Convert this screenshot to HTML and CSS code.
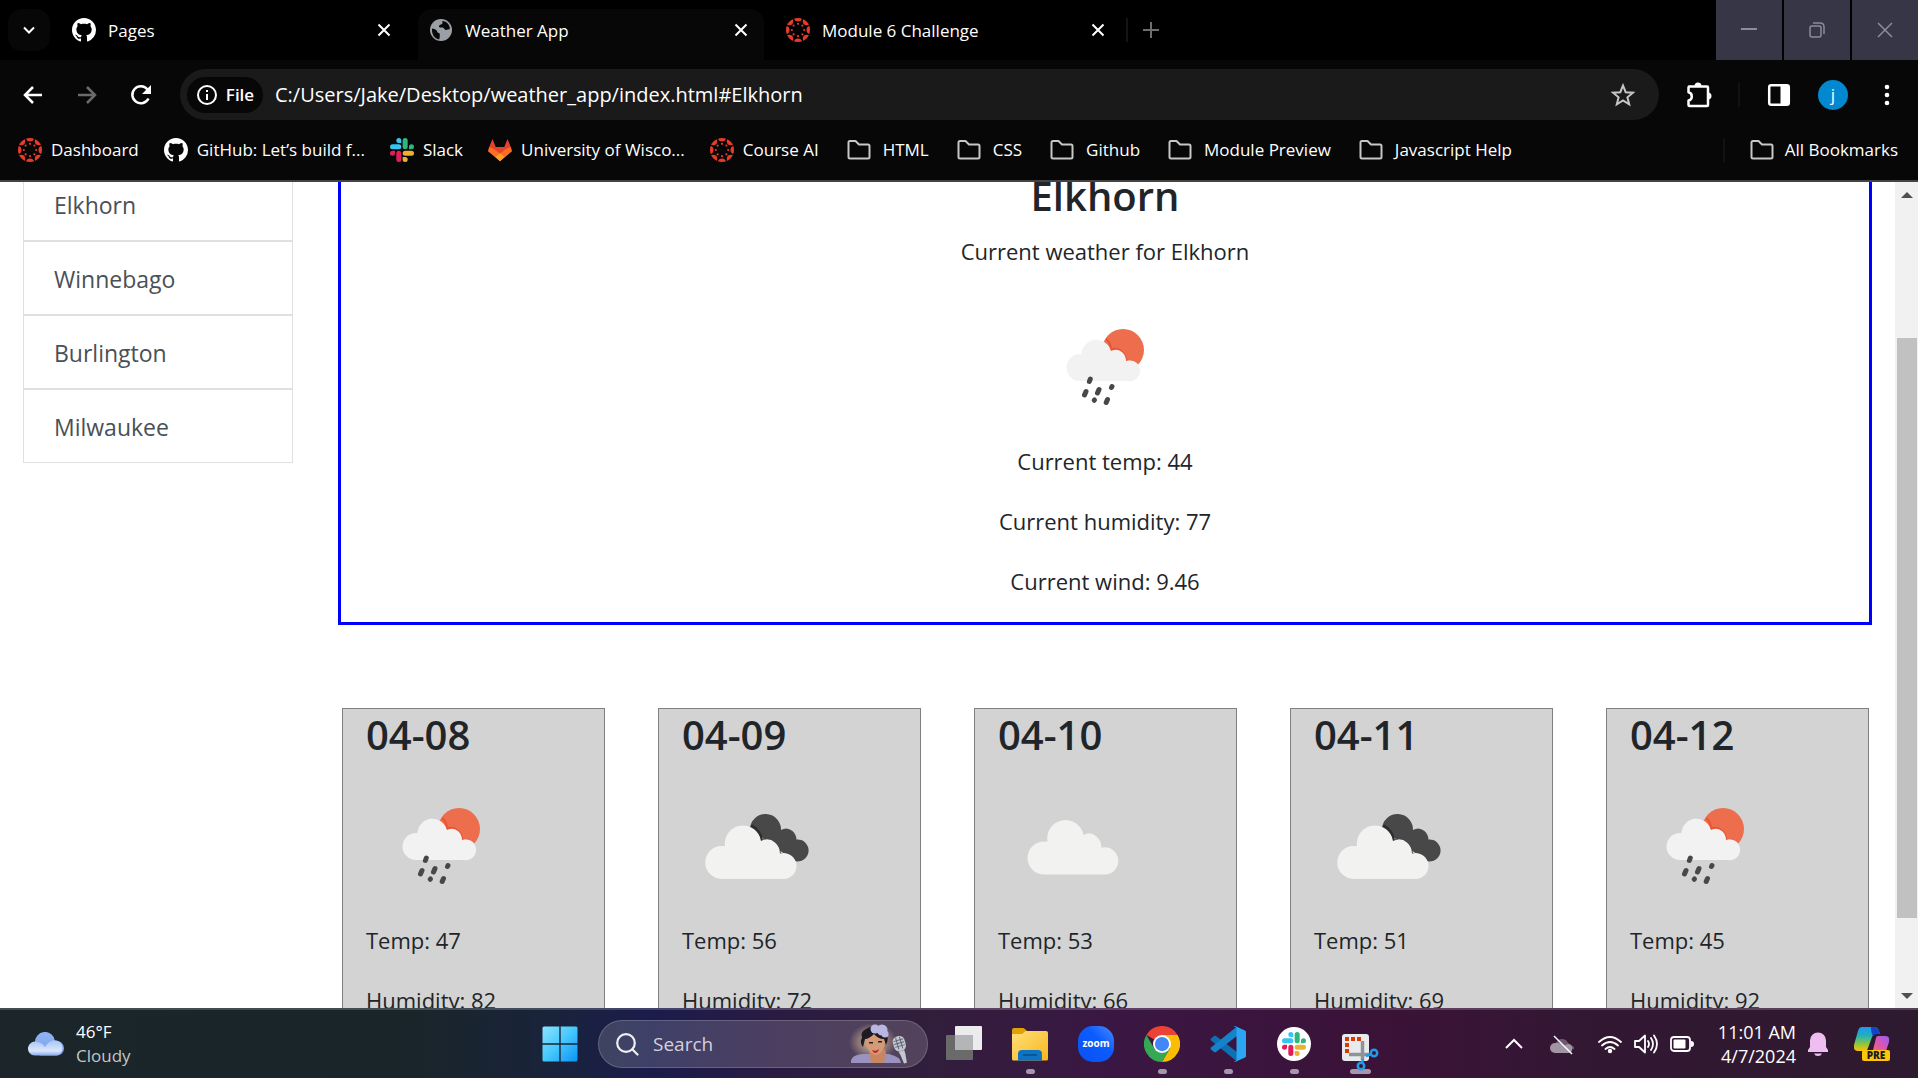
FILE: index.html
```html
<!DOCTYPE html>
<html lang="en">
<head>
<meta charset="utf-8">
<title>Weather App</title>
<link rel="stylesheet" href="styles.css">
</head>
<body>
<svg class="sprite" aria-hidden="true">
  <defs>
    <linearGradient id="g-win" x1="0" y1="0" x2="1" y2="1"><stop offset="0" stop-color="#8be3ff"/><stop offset=".5" stop-color="#45c8fb"/><stop offset="1" stop-color="#0a93f8"/></linearGradient>
    <linearGradient id="g-cloud" x1="0" y1="0" x2="0" y2="1"><stop offset="0" stop-color="#8fb2f4"/><stop offset="1" stop-color="#7fa4ea"/></linearGradient>
    <linearGradient id="g-cloud2" x1="0" y1="0" x2="0" y2="1"><stop offset="0" stop-color="#a9c4f6"/><stop offset=".7" stop-color="#dbe6fb"/><stop offset="1" stop-color="#88aaf0"/></linearGradient>
    <linearGradient id="g-folder" x1="0" y1="0" x2="1" y2="1"><stop offset="0" stop-color="#ffdf7c"/><stop offset="1" stop-color="#f8b71c"/></linearGradient>
    <linearGradient id="g-zoom" x1="1" y1="0" x2="0" y2="1"><stop offset="0" stop-color="#4c8bff"/><stop offset=".4" stop-color="#0b5cff"/><stop offset="1" stop-color="#0b50f0"/></linearGradient>
    <linearGradient id="g-cop1" x1="0" y1="0" x2="0" y2="1"><stop offset="0" stop-color="#2196f3"/><stop offset=".35" stop-color="#1cb0c0"/><stop offset=".7" stop-color="#8cc63f"/><stop offset="1" stop-color="#ffc107"/></linearGradient>
    <linearGradient id="g-cop2" x1="1" y1="0" x2="0" y2="1"><stop offset="0" stop-color="#9a5cf5"/><stop offset=".5" stop-color="#e356a8"/><stop offset="1" stop-color="#ff7a50"/></linearGradient>
    <radialGradient id="g-glow"><stop offset="0" stop-color="#f5dca8" stop-opacity=".9"/><stop offset=".5" stop-color="#e8c89a" stop-opacity=".5"/><stop offset="1" stop-color="#e8c89a" stop-opacity="0"/></radialGradient>
    <clipPath id="c-disc"><circle cx="12" cy="12" r="12"/></clipPath>

    <symbol id="github" viewBox="0 0 16 16"><path fill="#fff" d="M8 0C3.58 0 0 3.58 0 8c0 3.54 2.29 6.53 5.47 7.59.4.07.55-.17.55-.38 0-.19-.01-.82-.01-1.49-2.01.37-2.53-.49-2.69-.94-.09-.23-.48-.94-.82-1.13-.28-.15-.68-.52-.01-.53.63-.01 1.08.58 1.23.82.72 1.21 1.87.87 2.33.66.07-.52.28-.87.51-1.07-1.78-.2-3.64-.89-3.64-3.95 0-.87.31-1.59.82-2.15-.08-.2-.36-1.02.08-2.12 0 0 .67-.21 2.2.82.64-.18 1.32-.27 2-.27.68 0 1.36.09 2 .27 1.53-1.04 2.2-.82 2.2-.82.44 1.1.16 1.92.08 2.12.51.56.82 1.27.82 2.15 0 3.07-1.87 3.75-3.65 3.95.29.25.54.73.54 1.48 0 1.07-.01 1.93-.01 2.2 0 .21.15.46.55.38A8.013 8.013 0 0016 8c0-4.42-3.58-8-8-8z"/></symbol>
    <symbol id="canvas" viewBox="0 0 24 24"><g fill="#e43b2c"><g clip-path="url(#c-disc)"><circle cx="12" cy="-.5" r="4"/><circle cx="12" cy="24.500" r="4"/><circle cx="-.5" cy="12" r="4"/><circle cx="24.500" cy="12" r="4"/><circle cx="3.200" cy="3.200" r="4"/><circle cx="20.800" cy="3.200" r="4"/><circle cx="3.200" cy="20.800" r="4"/><circle cx="20.800" cy="20.800" r="4"/></g><circle cx="12" cy="5.800" r="1.100"/><circle cx="12" cy="18.200" r="1.100"/><circle cx="5.800" cy="12" r="1.100"/><circle cx="18.200" cy="12" r="1.100"/><circle cx="7.600" cy="7.600" r="1.100"/><circle cx="16.400" cy="7.600" r="1.100"/><circle cx="7.600" cy="16.400" r="1.100"/><circle cx="16.400" cy="16.400" r="1.100"/></g></symbol>
    <symbol id="globe" viewBox="0 0 24 24"><circle cx="12" cy="12" r="11" fill="#9aa0a6"/><path fill="#080808" d="M3 10.500c3.500.2 5 1.800 5.200 3.300.2 1.200 1.600 1 2.300 1.800.6.8.2 2 .2 3.400 0 1.200-.4 2-.5 2.500C5.500 20.500 2.500 16.500 3 10.500zM13 3c1.200 1.800.4 3-.8 3.500-1.500.6-2.200.6-2.200 2 0 1.200 1.500 1 3.500 1 1.500 0 1.500 2 3 2.400 1.300.3 2.600-.6 4.400-.6.3-5-4-8.300-7.900-8.300z"/></symbol>
    <symbol id="slack" viewBox="0 0 24 24"><path fill="#e01e5a" d="M5.042 15.165a2.528 2.528 0 0 1-2.520 2.523A2.528 2.528 0 0 1 0 15.165a2.527 2.527 0 0 1 2.522-2.520h2.520v2.520zM6.313 15.165a2.527 2.527 0 0 1 2.521-2.520 2.527 2.527 0 0 1 2.521 2.520v6.313A2.528 2.528 0 0 1 8.834 24a2.528 2.528 0 0 1-2.521-2.522v-6.313z"/><path fill="#36c5f0" d="M8.834 5.042a2.528 2.528 0 0 1-2.521-2.520A2.528 2.528 0 0 1 8.834 0a2.528 2.528 0 0 1 2.521 2.522v2.520H8.834zM8.834 6.313a2.528 2.528 0 0 1 2.521 2.521 2.528 2.528 0 0 1-2.521 2.521H2.522A2.528 2.528 0 0 1 0 8.834a2.528 2.528 0 0 1 2.522-2.521h6.312z"/><path fill="#2eb67d" d="M18.956 8.834a2.528 2.528 0 0 1 2.522-2.521A2.528 2.528 0 0 1 24 8.834a2.528 2.528 0 0 1-2.522 2.521h-2.522V8.834zM17.688 8.834a2.528 2.528 0 0 1-2.523 2.521 2.527 2.527 0 0 1-2.520-2.521V2.522A2.527 2.527 0 0 1 15.165 0a2.528 2.528 0 0 1 2.523 2.522v6.312z"/><path fill="#ecb22e" d="M15.165 18.956a2.528 2.528 0 0 1 2.523 2.522A2.528 2.528 0 0 1 15.165 24a2.527 2.527 0 0 1-2.520-2.522v-2.522h2.520zM15.165 17.688a2.527 2.527 0 0 1-2.520-2.523 2.526 2.526 0 0 1 2.520-2.520h6.313A2.527 2.527 0 0 1 24 15.165a2.528 2.528 0 0 1-2.522 2.523h-6.313z"/></symbol>
    <symbol id="gitlab" viewBox="0 0 24 24"><path fill="#e24329" d="M4.500 1 1 9.500 12 23 23 9.500 19.500 1l-3.200 8H7.700z"/><path fill="#fc6d26" d="M1 9.300 0 13.300 12 23.200l12-9.900-1-4c-3 .5-5 1.700-7 3.200L12 15.500 8 12.500C6 11 4 9.800 1 9.300z"/><path fill="#fca326" d="m12 15.300-4.500 3.800L12 23.200l4.500-4.100z"/></symbol>
    <symbol id="folder" viewBox="0 0 24 24"><path fill="none" stroke="#c7c7c7" stroke-width="2" stroke-linejoin="round" d="M1.500 4.500q0-1.500 1.500-1.500h5.500l3.500 3.500h9q1.500 0 1.500 1.500v11q0 1.500-1.500 1.500H3q-1.500 0-1.500-1.500z"/></symbol>
    <symbol id="close" viewBox="0 0 24 24"><path stroke="#fff" stroke-width="2" d="m6.500 6.500 11 11m0-11-11 11"/></symbol>

    <symbol id="rain" viewBox="0 0 150 150"><circle cx="93" cy="58" r="21" fill="#ec6e4c"/><path fill="none" stroke="#ea5233" stroke-width="2" d="M76 47q5 4 5 11 5-3 10 1 5 4 5 10 7-1 11 5"/><path fill="#f2f2f2" d="M50 89a13.500 13.500 0 0 1 0-27q1 0 1.500.1A15 15 0 0 1 81 59q7-3 11.500 1.500 3.500 3.500 3.500 8.500A10.500 10.500 0 1 1 97 89z"/><g stroke="#48484a" stroke-width="5" stroke-linecap="round"><path d="m60.300 87-.9 2.500M56 99.500l-1.500 3.500M69 97.500l-1.500 3.500M82 94.500l-.5 1M64.500 108l-.3.300M77.500 107.500l-1.300 3"/></g></symbol>
    <symbol id="cloud" viewBox="0 0 150 150"><path fill="#f2f2f0" d="M46 103.500a16.500 16.500 0 0 1 0-33q1.500 0 3.500.3A18.300 18.300 0 0 1 85.500 64q7-4 13 1.500 5 4.500 5 11.200A13.600 13.600 0 1 1 106.500 103.500z"/></symbol>
    <symbol id="clouds" viewBox="0 0 150 150"><path fill="#484849" d="M68 58a15.500 15.500 0 1 1 31 1q6-3.500 11.500 1 4 4 4 8.500a11 11 0 1 1-2 21.500Z"/><path fill="none" stroke="#2d2d30" stroke-width="4" d="M69 55q10 5 10 16 9-3 14 3 4 5 4 10 9 0 14 7"/><g transform="translate(-6 4)"><path fill="#f2f2f0" d="M46 104a16.500 16.500 0 0 1-.5-33q1.500 0 3.500.3A18 18 0 0 1 85 66q8-4 14 1.500 5 4.500 5 11A13 13 0 1 1 107 104z"/></g></symbol>
  </defs>
</svg>

<header class="browser">
  <div class="tabstrip">
    <button class="tab-search" aria-label="Search tabs"><svg width="24" height="24" viewBox="0 0 24 24"><path fill="none" stroke="#fff" stroke-width="2" d="m7 9.500 5 5 5-5"/></svg></button>
    <div class="tab"><svg class="ico"><use href="#github"/></svg><span>Pages</span><button aria-label="Close Pages"><svg class="ico"><use href="#close"/></svg></button></div>
    <div class="tab active"><svg class="ico"><use href="#globe"/></svg><span>Weather App</span><button aria-label="Close Weather App"><svg class="ico"><use href="#close"/></svg></button></div>
    <div class="tab"><svg class="ico"><use href="#canvas"/></svg><span>Module 6 Challenge</span><button aria-label="Close Module 6 Challenge"><svg class="ico"><use href="#close"/></svg></button></div>
    <button class="new-tab" aria-label="New tab"><svg class="ico" viewBox="0 0 24 24"><path stroke="#6e6e6e" stroke-width="2" d="M12 4v16M4 12h16"/></svg></button>
    <div class="window-controls">
      <button aria-label="Minimize"><svg class="ico" viewBox="0 0 24 24"><path stroke="#8d8d99" stroke-width="2" d="M4 11h16"/></svg></button>
      <button aria-label="Restore"><svg class="ico" viewBox="0 0 24 24"><g fill="none" stroke="#8d8d99" stroke-width="1.500"><rect x="5" y="8" width="11" height="11" rx="2"/><path d="M8 5h7q4 0 4 4v7"/></g></svg></button>
      <button aria-label="Close"><svg class="ico" viewBox="0 0 24 24"><path stroke="#8d8d99" stroke-width="1.500" d="m5 5 14 14M19 5 5 19"/></svg></button>
    </div>
  </div>

  <div class="toolbar">
    <div class="nav-buttons">
      <button aria-label="Back"><svg class="ico" viewBox="0 0 24 24"><path fill="none" stroke="#fff" stroke-width="2.500" d="M21 12H4m8-8-8 8 8 8"/></svg></button>
      <button aria-label="Forward"><svg class="ico" viewBox="0 0 24 24"><path fill="none" stroke="#6b6b6b" stroke-width="2.500" d="M3 12h17m-8-8 8 8-8 8"/></svg></button>
      <button aria-label="Reload"><svg class="ico" viewBox="0 0 24 24"><path fill="none" stroke="#fff" stroke-width="2.500" d="M19.500 15.500A8.500 8.500 0 1 1 18.500 6.500L20 8.500"/><path fill="#fff" d="M22 2v9h-9z"/></svg></button>
    </div>
    <div class="omnibox">
      <button class="chip"><svg width="22" height="22" viewBox="0 0 22 22"><circle cx="11" cy="11" r="9" fill="none" stroke="#fff" stroke-width="2"/><path stroke="#fff" stroke-width="2" d="M11 6v2m0 2v6"/></svg>File</button>
      <input type="text" aria-label="Address" value="C:/Users/Jake/Desktop/weather_app/index.html#Elkhorn">
      <button aria-label="Bookmark this page"><svg class="ico" viewBox="0 0 24 24"><path fill="none" stroke="#c7c7c7" stroke-width="2" d="m12 2.500 2.700 6.700 7.300.5-5.600 4.600 1.800 7L12 17.500l-6.200 3.800 1.800-7L2 9.700l7.300-.5z"/></svg></button>
    </div>
    <div class="actions">
      <button aria-label="Extensions"><svg width="26" height="26" viewBox="0 0 26 26"><path fill="none" stroke="#fff" stroke-width="2.500" stroke-linejoin="round" d="M3 4.500h18q1 0 1 1V23q0 1-1 1H3.500q-1 0-1-1v-4.500a4.200 4.200 0 0 0 0-8.200V5.500q0-1 1-1z"/><path fill="#fff" d="M8.500 4a3.500 3.500 0 0 1 7 0zM22 10.500a3.500 3.500 0 0 1 0 7z"/></svg></button>
      <span class="divider"></span>
      <button aria-label="Side panel"><svg class="ico" viewBox="0 0 24 24"><rect x="2.200" y="2.200" width="19.600" height="19.600" rx="2" fill="none" stroke="#fff" stroke-width="2.500"/><path fill="#fff" d="M13.500 2H22v20h-8.500z"/></svg></button>
      <button class="avatar" aria-label="Profile">j</button>
      <button aria-label="Menu"><svg class="ico" viewBox="0 0 24 24"><g fill="#fff"><circle cx="12" cy="4" r="2.300"/><circle cx="12" cy="12" r="2.300"/><circle cx="12" cy="20" r="2.300"/></g></svg></button>
    </div>
  </div>

  <nav class="bookmarks">
    <a href="#"><svg class="ico"><use href="#canvas"/></svg>Dashboard</a>
    <a href="#"><svg class="ico"><use href="#github"/></svg>GitHub: Let’s build f...</a>
    <a href="#"><svg class="ico"><use href="#slack"/></svg>Slack</a>
    <a href="#"><svg class="ico"><use href="#gitlab"/></svg>University of Wisco...</a>
    <a href="#"><svg class="ico"><use href="#canvas"/></svg>Course AI</a>
    <a class="dir" href="#"><svg class="ico"><use href="#folder"/></svg>HTML</a>
    <a class="dir" href="#"><svg class="ico"><use href="#folder"/></svg>CSS</a>
    <a class="dir" href="#"><svg class="ico"><use href="#folder"/></svg>Github</a>
    <a class="dir" href="#"><svg class="ico"><use href="#folder"/></svg>Module Preview</a>
    <a class="dir" href="#"><svg class="ico"><use href="#folder"/></svg>Javascript Help</a>
    <span class="divider"></span>
    <a href="#"><svg class="ico"><use href="#folder"/></svg>All Bookmarks</a>
  </nav>
</header>

<div class="viewport">
  <div class="page">
    <nav class="cities">
      <a href="#Elkhorn">Elkhorn</a>
      <a href="#Winnebago">Winnebago</a>
      <a href="#Burlington">Burlington</a>
      <a href="#Milwaukee">Milwaukee</a>
    </nav>
    <main>
      <section class="current">
        <h1>Elkhorn</h1>
        <p>Current weather for Elkhorn</p>
        <svg class="weather"><use href="#rain"/></svg>
        <p>Current temp: 44</p>
        <p>Current humidity: 77</p>
        <p>Current wind: 9.46</p>
      </section>
      <section class="forecast">
        <article><h2>04-08</h2><svg class="weather"><use href="#rain"/></svg><p>Temp: 47</p><p>Humidity: 82</p></article>
        <article><h2>04-09</h2><svg class="weather"><use href="#clouds"/></svg><p>Temp: 56</p><p>Humidity: 72</p></article>
        <article><h2>04-10</h2><svg class="weather"><use href="#cloud"/></svg><p>Temp: 53</p><p>Humidity: 66</p></article>
        <article><h2>04-11</h2><svg class="weather"><use href="#clouds"/></svg><p>Temp: 51</p><p>Humidity: 69</p></article>
        <article><h2>04-12</h2><svg class="weather"><use href="#rain"/></svg><p>Temp: 45</p><p>Humidity: 92</p></article>
      </section>
    </main>
  </div>
  <div class="scrollbar">
    <svg width="12" height="6" viewBox="0 0 12 6"><path fill="#505050" d="M6 0l6 6H0z"/></svg>
    <div class="track"><div class="thumb"></div></div>
    <svg width="12" height="6" viewBox="0 0 12 6"><path fill="#505050" d="M0 0h12L6 6z"/></svg>
  </div>
</div>

<footer class="taskbar">
  <button class="widget">
    <svg width="36" height="24" viewBox="0 0 36 24"><path fill="url(#g-cloud)" d="M7 11a10 10 0 0 1 20-2 7.500 7.500 0 0 1 9 7.500 7 7 0 0 1-7 7H12z"/><path fill="url(#g-cloud2)" d="M7 23.500a7 7 0 1 1 3-13.300q5 1 7 5 2-4.500 7-6.500a7.500 7.500 0 0 1 5 14.800z"/></svg>
    <span>46°F<small>Cloudy</small></span>
  </button>
  <div class="apps">
    <button aria-label="Start"><svg width="36" height="36" viewBox="0 0 36 36"><path fill="url(#g-win)" d="M2 .5h15.300v16.800H.5V2Q.5.500 2 .5zM18.700.5H34q1.500 0 1.500 1.500v15.300H18.700zM.5 18.700h16.800v16.800H2q-1.500 0-1.500-1.500zM18.700 18.700h16.800V34q0 1.500-1.500 1.500H18.700z"/></svg></button>
    <label class="search">
      <svg class="ico" viewBox="0 0 24 24"><g fill="none" stroke="#f0f0f4" stroke-width="2.200"><circle cx="11" cy="11" r="8.800"/><path stroke-linecap="round" d="m17.500 17.500 5 5"/></g></svg>
      <input type="search" placeholder="Search" aria-label="Search">
      <svg width="62" height="40" viewBox="0 0 62 40"><ellipse cx="24" cy="18" rx="24" ry="19" fill="url(#g-glow)"/><path fill="#9a93bf" d="M2 39q-1-8 12-9h26q12 3 12 9z"/><path fill="#c98663" d="M20 26h13l2 13H22z"/><path fill="#d49a76" d="M16 16q0-8 11-8 9 0 9 9 0 12-9 14-9-2-11-15z"/><path fill="#1f1a22" d="M14 23q-4-5-1-9-2-6 4-9 6-4 11-1l8 5q5 4 1 12l-2-6q-6 0-10-5-5 5-9 5z"/><g fill="#b9b6e4"><circle cx="26" cy="5" r="4.500"/><circle cx="33" cy="6" r="5.500"/><circle cx="36" cy="10" r="3.500"/></g><path fill="#c98663" d="M27 39q-1-7 5-10l4-5 1 6q0 6-5 9z"/><path fill="#c8202c" d="M23 26q4 2 7-1-1 4-4 4-2 0-3-3z"/><path fill="#22202a" d="M20 18h4v1.500h-4zM29 17h4v1.500h-4z"/><g transform="rotate(-16 51 22)"><rect x="45" y="12" width="12" height="15" rx="5" fill="#c3c7d0"/><path stroke="#5f6370" d="M46 16h10M46 19h10M46 22h10M49 13v12M53 13v12"/><path fill="#c3c7d0" d="M48 27h6v4l-1 9h-3l-1-9z"/></g></svg>
    </label>
    <button aria-label="Task view"><svg width="36" height="36" viewBox="0 0 36 36"><rect x="9" width="27" height="24" rx="1" fill="#ececee"/><rect y="9" width="27" height="25" rx="1" fill="#6a6a6a"/><path fill="#b5b5b8" d="M9 9h18v15H9z"/></svg></button>
    <button class="open" aria-label="File Explorer"><svg width="36" height="36" viewBox="0 0 36 36"><path fill="#e0a106" d="M0 4q0-2 2-2h9q1 0 3 2l2 2-3 4H0z"/><path fill="url(#g-folder)" d="M0 8h10l4-3h20q2 0 2 2v26q0 1.500-1.500 1.500h-33Q0 34.500 0 33z"/><path fill="#0f73c4" d="M6 34.500V28q0-4 4-4h16q4 0 4 4v6.500z"/><path stroke="#0b4c85" stroke-width="1.500" d="M11 29h14"/></svg></button>
    <button aria-label="Zoom"><svg width="36" height="36" viewBox="0 0 36 36"><rect width="36" height="36" rx="15" fill="url(#g-zoom)"/><text class="zoom-text" x="18" y="21" text-anchor="middle">zoom</text></svg></button>
    <button class="open" aria-label="Chrome"><svg width="36" height="36" viewBox="0 0 48 48"><path fill="#ea4335" d="M24 24 3.200 12A24 24 0 0 1 44.800 12z"/><path fill="#fbbc04" d="M24 12h20.800A24 24 0 0 1 24 48l10.400-18z"/><path fill="#34a853" d="M3.200 12 13.600 30 24 36l10.400-6L24 48A24 24 0 0 1 3.200 12z"/><circle cx="24" cy="24" r="12" fill="#fff"/><circle cx="24" cy="24" r="9.500" fill="#4285f4"/></svg></button>
    <button class="open" aria-label="Visual Studio Code"><svg width="36" height="36" viewBox="0 0 36 36"><path fill="#0f6fb3" d="M1 12.500 4 10q1-.7 2 0l21 16v9.500L1 14.500q-1-1 0-2z"/><path fill="#1583cc" d="M1 23.500 4 26q1 .7 2 0l21-16V.5L1 21.500q-1 1 0 2z"/><path fill="#2aa6f2" d="M25.500.3 35 4.500q1 .5 1 1.500v24q0 1-1 1.500l-9.500 4.200q-1.500.3-2-.7 3 1 3-2V3q0-3-3-2 .5-1 2-.7z"/></svg></button>
    <button class="open" aria-label="Slack"><svg width="36" height="36" viewBox="0 0 36 36"><circle cx="18" cy="18" r="17" fill="#fff"/><use href="#slack" x="6" y="6" width="24" height="24"/></svg></button>
    <button class="open focused" aria-label="Snipping Tool"><svg class="snip" width="36" height="36" viewBox="0 0 36 36"><rect y="8" width="27" height="27" rx="3" fill="#e9eaee"/><path fill="none" stroke="#d83b01" stroke-width="4" stroke-dasharray="4 2" d="M5 27V13h14"/><path fill="none" stroke="#8e9299" stroke-width="3.500" d="M20.500 15v19M7 28.500h20"/><g fill="none" stroke="#1e9de8" stroke-width="2.500"><circle cx="32" cy="27" r="3.200"/><circle cx="19" cy="40" r="3.200"/><path d="m24 30 5-2M20 37l1-4"/></g></svg></button>
  </div>
  <div class="tray">
    <button aria-label="Show hidden icons"><svg class="ico" viewBox="0 0 24 24"><path fill="none" stroke="#fff" stroke-width="2" d="m4 16 8-8 8 8"/></svg></button>
    <svg class="ico cloud-off" viewBox="0 0 24 24"><path fill="#6e5a70" d="M6 11a6.500 6.500 0 0 1 12 0l6 4v2L6 15z"/><path fill="#a195a3" d="M5 21a5 5 0 0 1 0-10q5-1 9 3 2-2 5-2a4.700 4.700 0 0 1 0 9z"/><path stroke="#fff" stroke-width="1.500" d="m4 4 18 18"/></svg>
    <svg class="ico" viewBox="0 0 24 24"><g fill="none" stroke="#fff" stroke-width="1.800" stroke-linecap="round"><path d="M1 10q11-10 22 0M4 13.500q8-7 16 0M7.500 17q4.500-4 9 0"/></g><circle cx="12" cy="19" r="2.200" fill="#fff"/></svg>
    <svg class="ico" viewBox="0 0 24 24"><g fill="none" stroke="#fff" stroke-width="1.800" stroke-linejoin="round" stroke-linecap="round"><path d="M1 9h4l6-5.500v17L5 15H1z"/><path d="M14 9q2 3 0 6M17 6q4 6 0 12M20 3.500q6 8.500 0 17"/></g></svg>
    <svg class="ico" viewBox="0 0 24 24"><rect x="1" y="5" width="19" height="14" rx="3" fill="none" stroke="#fff" stroke-width="1.800"/><rect x="3.500" y="7.500" width="12" height="9" rx="1" fill="#fff"/><path fill="#fff" d="M21 9q3 0 3 3t-3 3z"/></svg>
    <div class="clock"><time>11:01 AM</time><time>4/7/2024</time></div>
    <svg class="ico bell" viewBox="0 0 24 24"><path fill="#f0bdf2" d="M2 20v-2l2-3V8.500a8 8 0 0 1 16 0V15l2 3v2zM8 21.500h8q-1 2.500-4 2.500t-4-2.500z"/></svg>
    <button aria-label="Copilot"><svg width="36" height="36" viewBox="0 0 36 36"><path fill="url(#g-cop1)" d="M8 1h12q4 0 5 4l1 3h-4q-3 0-4 3l-4 11q-1 3-4 3H4q-5 0-4-6L4 5q1-4 4-4z"/><path fill="#1343c8" d="M17 1h3q4 0 5 4l1 3h-4q-2 0-3 2-2-3-2-9z"/><path fill="url(#g-cop2)" d="M24 10h8q4 0 3 6l-3 9q-1 4-5 4H15q3-1 4-5l3-12q.5-2 2-2z"/><rect x="8" y="24" width="28" height="11" rx="2" fill="#fec60a"/><text class="pre-text" x="22" y="33" text-anchor="middle">PRE</text></svg></button>
  </div>
</footer>
</body>
</html>
```
FILE: styles.css
```css
* { box-sizing: border-box; }

body {
  margin: 0;
  height: 100vh;
  display: flex;
  flex-direction: column;
  overflow: hidden;
  font-family: "Open Sans", "Noto Sans", sans-serif;
  font-size: 22px;
  line-height: 34px;
  color: #212529;
  background: #fff;
}

button {
  display: flex;
  align-items: center;
  justify-content: center;
  padding: 0;
  border: 0;
  background: none;
  color: inherit;
  font: inherit;
}

input {
  min-width: 0;
  flex: 1;
  padding: 0;
  border: 0;
  outline: 0;
  background: none;
  color: inherit;
  font: inherit;
}

a { color: inherit; text-decoration: none; }
svg { display: block; flex: none; }
.sprite { position: absolute; width: 0; height: 0; }
.ico { width: 24px; height: 24px; }

/* Browser frame */
.browser {
  flex: none;
  background: #070707;
  border-bottom: 2px solid #444;
  color: #fff;
  font-size: 17px;
  line-height: 24px;
}

.tabstrip {
  display: flex;
  align-items: center;
  gap: 11px;
  height: 60px;
  padding-left: 8px;
  background: #000;
}

.tab-search {
  width: 42px;
  height: 42px;
  border-radius: 14px;
  background: #070707;
}

.tab {
  display: flex;
  align-items: center;
  gap: 12px;
  width: 346px;
  height: 42px;
  padding: 0 11px;
}

.tab span { flex: 1; padding-top: 2px; }

.tab.active {
  align-self: flex-end;
  height: 51px;
  padding-bottom: 9px;
  border-radius: 14px 14px 0 0;
  background: #070707;
}

.new-tab {
  width: 50px;
  height: 24px;
  margin-left: -6px;
  border-left: 2px solid #141414;
  padding-right: 2px;
}

.window-controls {
  display: flex;
  gap: 2px;
  align-self: stretch;
  margin-left: auto;
}

.window-controls button { width: 66px; background: #363646; }

.toolbar {
  display: flex;
  align-items: center;
  padding: 9px 19px 9px 21px;
}

.nav-buttons { display: flex; gap: 30px; margin-right: 27px; }

.omnibox {
  flex: 1;
  display: flex;
  align-items: center;
  gap: 12px;
  height: 51px;
  padding: 0 24px 0 7px;
  border-radius: 26px;
  background: #1a1a1a;
  font-size: 20px;
}

.chip {
  gap: 8px;
  width: 76px;
  height: 36px;
  border-radius: 18px;
  background: #070707;
  font-size: 17px;
  font-weight: 600;
}

.actions { display: flex; align-items: center; margin-left: 27px; }
.divider { width: 2px; height: 24px; background: #121212; }
.actions .divider { margin: 0 27px 0 26px; }

.avatar {
  width: 30px;
  height: 30px;
  margin: 0 27px;
  border-radius: 50%;
  background: #0288d1;
}

.bookmarks {
  display: flex;
  align-items: center;
  gap: 25px;
  height: 51px;
  padding: 0 20px 9px 18px;
  font-size: 17px;
}

.bookmarks a { display: flex; align-items: center; gap: 9px; white-space: nowrap; }
.bookmarks .dir { gap: 12px; margin-left: 3px; }
.bookmarks .divider { margin-left: auto; }
.bookmarks .divider + a { gap: 11px; }

/* Weather page */
.viewport { flex: 1; min-height: 0; display: flex; overflow: hidden; }

/* The page is shown part-way scrolled */
.page {
  flex: 1;
  display: flex;
  align-items: flex-start;
  gap: 45px;
  margin-top: -15px;
  padding: 0 23px;
}

.cities { flex: none; width: 270px; font-size: 23px; color: #495057; }

.cities a {
  display: block;
  padding: 20px 30px 18px;
  border: 1px solid #dee0e2;
}

main { flex: 1; }
h1, h2, p { margin: 0; padding-top: 2px; }

h1, h2 {
  margin-bottom: 12px;
  font-size: 40px;
  font-weight: 600;
  line-height: 48px;
}

p { margin-bottom: 24px; }
.weather { width: 150px; height: 150px; }

.current {
  padding-top: 3px;
  border: 3px solid #00f;
  border-top: 0;
  text-align: center;
}

.current .weather { margin: 0 auto; }

.forecast {
  display: grid;
  grid-template-columns: repeat(5, 1fr);
  gap: 53px;
  margin: 83px 3px 0 4px;
}

.forecast article {
  padding: 0 23px;
  border: 1px solid #808080;
  background: #d3d3d3;
}

.scrollbar {
  display: flex;
  flex-direction: column;
  align-items: center;
  gap: 10px;
  width: 23px;
  padding: 10px 0 9px;
  background: #f1f1f1;
}

.track { flex: 1; padding: 130px 0 65px; }
.thumb { width: 20px; height: 100%; background: #c1c1c1; }

/* Taskbar */
.taskbar {
  flex: none;
  display: grid;
  grid-template-columns: 1fr auto 1fr;
  align-items: center;
  height: 70px;
  padding: 0 26px 0 28px;
  border-top: 2px solid rgb(255 255 255 / 18%);
  background: linear-gradient(90deg, #1b252a 0%, #1a252b 22%, #19233c 29%, #1b1c4c 34%, #2b1b42 41%, #311e3c 48%, #3a1743 58%, #3b1238 72%, #331733 82%, #2d1a2f 100%) border-box;
  color: #fff;
  font-size: 17px;
  line-height: 24px;
}

.widget { justify-self: start; gap: 12px; text-align: left; }
.widget small { display: block; font-size: 17px; color: #c4c7c9; }

.apps { display: flex; align-items: center; gap: 30px; }
.apps button { position: relative; width: 36px; height: 66px; }

.open::after {
  content: "";
  position: absolute;
  bottom: 3px;
  width: 9px;
  height: 5px;
  border-radius: 3px;
  background: #a596ac;
}

.focused::after { width: 21px; }
.snip { position: relative; z-index: 1; overflow: visible; }

.search {
  display: flex;
  align-items: center;
  gap: 14px;
  width: 330px;
  height: 48px;
  margin: 0 -12px 0 -10px;
  padding: 0 16px;
  border: 1px solid rgb(255 255 255 / 18%);
  border-radius: 24px;
  background: rgb(255 255 255 / 16%);
  font-size: 19px;
}

.search input::placeholder { color: #d3d1dc; opacity: 1; }

.zoom-text { font-size: 10px; font-weight: 700; fill: #fff; }
.pre-text { font-size: 10px; font-weight: 800; fill: #1b1b1b; }

.tray { display: flex; align-items: center; justify-self: end; gap: 12px; margin-right: 2px; }
.cloud-off { margin: 0 12px; }
.clock { margin: 0 -2px 0 12px; font-size: 18px; text-align: right; }
.clock time { display: block; }
.tray .bell + button { margin-left: 12px; }
```
